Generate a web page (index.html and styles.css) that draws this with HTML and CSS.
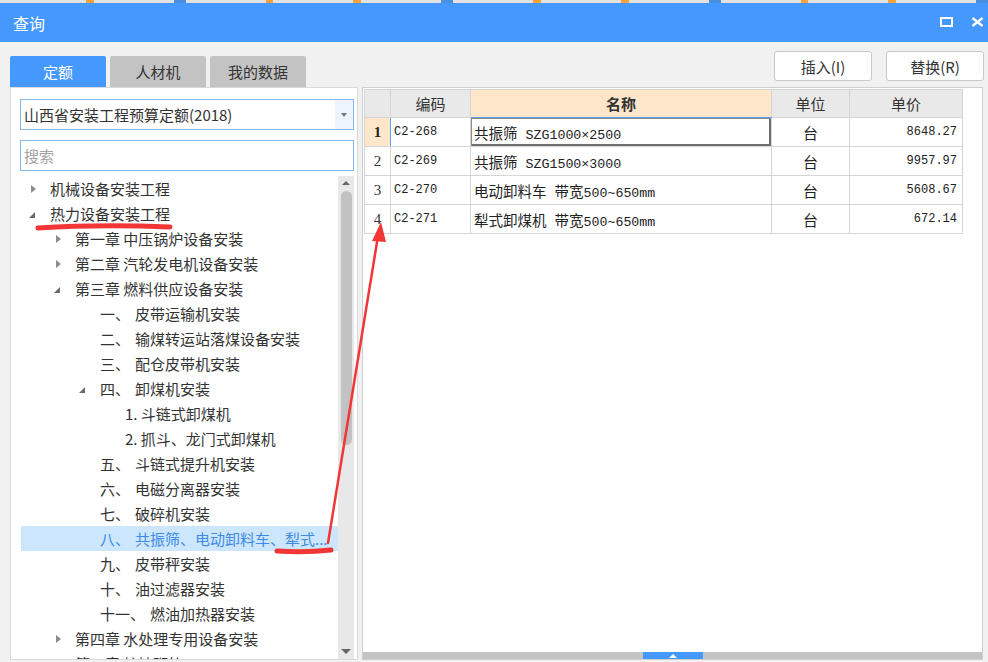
FILE: index.html
```html
<!DOCTYPE html>
<html lang="zh-CN">
<head>
<meta charset="utf-8">
<title>查询</title>
<link rel="stylesheet" href="styles.css">
</head>
<body>
<div class="strip"><i></i><i class="b"></i><i></i><i></i><i class="b"></i><i></i><i></i><i class="b"></i><i></i><i></i><i class="b"></i></div>
<header class="titlebar">
  <span class="title">查询</span>
  <div class="wctl">
    <svg width="13" height="10" viewBox="0 0 13 10"><rect x="1" y="1" width="11" height="8" fill="none" stroke="#fff" stroke-width="2"/></svg>
    <svg width="13" height="10" viewBox="0 0 13 10"><path d="M1.5 1L11.5 9M11.5 1L1.5 9" stroke="#fff" stroke-width="2.3" fill="none"/></svg>
  </div>
</header>
<div class="toolbar">
  <div class="tabs">
    <div class="tab active">定额</div>
    <div class="tab">人材机</div>
    <div class="tab">我的数据</div>
  </div>
  <div class="btns">
    <button class="btn">插入(I)</button>
    <button class="btn">替换(R)</button>
  </div>
</div>
<div class="main">
  <section class="left">
    <div class="combo"><span class="combo-text">山西省安装工程预算定额(2018)</span><span class="combo-arrow"></span></div>
    <div class="search">搜索</div>
    <div class="treewrap">
      <div class="tree">
        <div class="node l0"><i class="tw c"></i><span>机械设备安装工程</span></div>
        <div class="node l0"><i class="tw e"></i><span>热力设备安装工程</span></div>
        <div class="node l1"><i class="tw c"></i><span>第一章 中压锅炉设备安装</span></div>
        <div class="node l1"><i class="tw c"></i><span>第二章 汽轮发电机设备安装</span></div>
        <div class="node l1"><i class="tw e"></i><span>第三章 燃料供应设备安装</span></div>
        <div class="node l2"><i class="tw"></i><span class="num">一、</span><span>皮带运输机安装</span></div>
        <div class="node l2"><i class="tw"></i><span class="num">二、</span><span>输煤转运站落煤设备安装</span></div>
        <div class="node l2"><i class="tw"></i><span class="num">三、</span><span>配仓皮带机安装</span></div>
        <div class="node l2"><i class="tw e"></i><span class="num">四、</span><span>卸煤机安装</span></div>
        <div class="node l3"><i class="tw"></i><span>1. 斗链式卸煤机</span></div>
        <div class="node l3"><i class="tw"></i><span>2. 抓斗、龙门式卸煤机</span></div>
        <div class="node l2"><i class="tw"></i><span class="num">五、</span><span>斗链式提升机安装</span></div>
        <div class="node l2"><i class="tw"></i><span class="num">六、</span><span>电磁分离器安装</span></div>
        <div class="node l2"><i class="tw"></i><span class="num">七、</span><span>破碎机安装</span></div>
        <div class="node l2 sel"><i class="tw"></i><span class="num">八、</span><span>共振筛、电动卸料车、犁式...</span></div>
        <div class="node l2"><i class="tw"></i><span class="num">九、</span><span>皮带秤安装</span></div>
        <div class="node l2"><i class="tw"></i><span class="num">十、</span><span>油过滤器安装</span></div>
        <div class="node l2"><i class="tw"></i><span class="num">十一、</span><span>燃油加热器安装</span></div>
        <div class="node l1"><i class="tw c"></i><span>第四章 水处理专用设备安装</span></div>
        <div class="node l1"><i class="tw c"></i><span>第五章 炉墙砌筑</span></div>
      </div>
      <div class="vscroll"><i class="up"></i><div class="thumb"></div><div class="fill"></div><i class="down"></i></div>
    </div>
  </section>
  <section class="right">
    <div class="gridarea">
      <table class="grid">
        <colgroup><col class="c-rn"><col class="c-code"><col class="c-name"><col class="c-unit"><col class="c-price"></colgroup>
        <thead>
          <tr><th></th><th>编码</th><th class="hname">名称</th><th>单位</th><th>单价</th></tr>
        </thead>
        <tbody>
          <tr><td class="rn cur">1</td><td class="code">C2-268</td><td class="nm focus">共振筛<span class="m"> SZG1000×2500</span></td><td class="unit">台</td><td class="price">8648.27</td></tr>
          <tr><td class="rn">2</td><td class="code">C2-269</td><td class="nm">共振筛<span class="m"> SZG1500×3000</span></td><td class="unit">台</td><td class="price">9957.97</td></tr>
          <tr><td class="rn">3</td><td class="code">C2-270</td><td class="nm">电动卸料车<span class="m"> </span>带宽<span class="m">500~650mm</span></td><td class="unit">台</td><td class="price">5608.67</td></tr>
          <tr><td class="rn">4</td><td class="code">C2-271</td><td class="nm">犁式卸煤机<span class="m"> </span>带宽<span class="m">500~650mm</span></td><td class="unit">台</td><td class="price">672.14</td></tr>
        </tbody>
      </table>
    </div>
    <div class="hsplit"><div class="grip"><i></i></div></div>
  </section>
</div>
<svg class="marks" width="988" height="662" viewBox="0 0 988 662">
  <path d="M38 228 Q100 224 170 227" stroke="#f23636" stroke-width="5" stroke-linecap="round" fill="none"/>
  <path d="M277 551 Q305 553 331 550" stroke="#f23636" stroke-width="5" stroke-linecap="round" fill="none"/>
  <path d="M328 543 L378 236" stroke="#f23636" stroke-width="2.5" stroke-linecap="round" fill="none"/>
  <polygon points="381,222 372,241 386,242" fill="#f23636"/>
</svg>
</body>
</html>
```
FILE: styles.css
```css
* { box-sizing: border-box; margin: 0; padding: 0; }
html, body { width: 988px; height: 662px; overflow: hidden; }
body {
  background: #f1f1f1;
  font-family: "Noto Sans CJK SC", "Noto Sans", sans-serif;
  color: #333;
  font-size: 15px;
  position: relative;
}

.strip { height: 3px; background: #e2e2e2; display: flex; gap: 80px; padding-left: 86px; }
.strip i { width: 9px; background: #f5a23a; }
.strip i.b { background: #4a8fe0; width: 14px; }

.titlebar {
  height: 39px;
  background: #4599fe;
  display: flex;
  align-items: center;
  padding: 0 4px 0 13px;
  color: #fff;
}
.title { flex: 1; font-size: 16px; }
.wctl { display: flex; align-items: center; gap: 18px; padding-bottom: 1px; }
.wctl svg { display: block; }

.toolbar {
  height: 45px;
  display: flex;
  justify-content: space-between;
  padding: 0 4px 0 10px;
}
.tabs { display: flex; gap: 4px; align-self: flex-end; }
.tab {
  width: 96px;
  height: 31px;
  background: #c3c3c3;
  border-radius: 2px 2px 0 0;
  display: flex;
  align-items: center;
  justify-content: center;
  font-size: 15px;
  color: #333;
}
.tab.active { background: #4599fe; color: #fff; }
.btns { display: flex; gap: 14px; padding-top: 9px; align-items: flex-start; }
.btn {
  width: 98px;
  height: 30px;
  background: #fff;
  border: 1px solid #c9c9c9;
  border-radius: 3px;
  font-family: "Noto Sans CJK SC", "Noto Sans", sans-serif;
  font-size: 15px;
  color: #333;
}

.main {
  display: flex;
  gap: 4px;
  padding: 0 5px 0 10px;
  height: 573px;
}

.left {
  width: 348px;
  flex: none;
  background: #fff;
  border: 1px solid #d9d9d9;
  padding: 11px 3px 0 9px;
  display: flex;
  flex-direction: column;
}
.combo {
  height: 31px;
  border: 1px solid #86b6ee;
  display: flex;
  align-items: stretch;
}
.combo-text { flex: 1; padding-left: 3px; display: flex; align-items: center; font-size: 15px; color: #333; }
.combo-arrow {
  width: 18px;
  background: #eef4fd;
  display: flex;
  align-items: center;
  justify-content: center;
}
.combo-arrow::after {
  content: "";
  border-top: 4px solid #777;
  border-left: 3.5px solid transparent;
  border-right: 3.5px solid transparent;
}
.search {
  height: 31px;
  margin-top: 10px;
  border: 1px solid #86b6ee;
  padding-left: 3px;
  display: flex;
  align-items: center;
  color: #a3a3a3;
  font-size: 15px;
}

.treewrap {
  margin-top: 5px;
  flex: 1;
  min-height: 0;
  display: flex;
  padding-left: 1px;
}
.tree { width: 317px; overflow: hidden; }
.node {
  height: 25px;
  display: flex;
  align-items: center;
  white-space: nowrap;
  font-size: 15px;
  color: #333;
}
.node.l0 { padding-left: 10px; }
.node.l1 { padding-left: 35px; }
.node.l2 { padding-left: 60px; }
.node.l3 { padding-left: 85px; }
.node.sel { background: #cce6fd; color: #3d8be3; }
.tw { width: 19px; flex: none; display: flex; align-items: center; height: 10px; }
.tw.c::before {
  content: "";
  border-left: 5px solid #8c8c8c;
  border-top: 4.5px solid transparent;
  border-bottom: 4.5px solid transparent;
}
.tw.e::before {
  content: "";
  margin-left: -2px;
  margin-top: 3px;
  border-bottom: 6px solid #6a6a6a;
  border-left: 6px solid transparent;
}
.num { margin-right: 5px; }

.vscroll {
  width: 16px;
  flex: none;
  background: #e8e8e8;
  display: flex;
  flex-direction: column;
  align-items: center;
  padding: 5px 0 5px;
}
.vscroll .up {
  border-bottom: 4px solid #666;
  border-left: 4.5px solid transparent;
  border-right: 4.5px solid transparent;
}
.vscroll .thumb {
  width: 11px;
  height: 254px;
  margin-top: 6px;
  background: #c2c2c2;
  border-radius: 6px;
}
.vscroll .fill { flex: 1; }
.vscroll .down {
  border-top: 5px solid #666;
  border-left: 5px solid transparent;
  border-right: 5px solid transparent;
}

.right {
  flex: 1;
  background: #fff;
  border: 1px solid #cfcfcf;
  display: flex;
  flex-direction: column;
}
.gridarea { flex: 1; padding: 1px 0 0 1px; }
.grid {
  border-collapse: collapse;
  table-layout: fixed;
  width: 598px;
}
.c-rn { width: 26px; }
.c-code { width: 80px; }
.c-name { width: 301px; }
.c-unit { width: 78px; }
.c-price { width: 113px; }
.grid th, .grid td { border: 1px solid #d5d5d5; padding: 0; white-space: nowrap; overflow: hidden; }
.grid th {
  height: 28px;
  background: #e9e9e9;
  font-weight: normal;
  font-size: 15px;
  color: #333;
  text-align: center;
}
.grid th.hname { background: #fde6c9; font-weight: bold; border-bottom: 1px solid #5aa2f5; }
.grid td { height: 29px; }
.rn { text-align: center; font-family: "Liberation Serif", serif; font-size: 15px; color: #333; }
.rn.cur { background: #fde6c9; font-weight: bold; color: #222; border-right: 1px solid #5aa2f5; }
.code { font-family: "Liberation Mono", monospace; font-size: 12px; padding-left: 3px !important; color: #222; }
.nm { font-size: 14.5px; padding-left: 3px !important; color: #222; }
.nm .m { font-family: "Liberation Mono", monospace; font-size: 13.3px; }
.nm.focus { box-shadow: inset 1px 1px 0 #8a8a8a, inset -2px -2px 0 #6e6e6e; }
.unit { text-align: center; font-size: 15px; color: #222; }
.price { text-align: right; font-family: "Liberation Mono", monospace; font-size: 12px; padding-right: 5px !important; color: #222; }

.hsplit {
  height: 7px;
  background: #c3c3c3;
  display: flex;
  justify-content: center;
}
.grip {
  width: 60px;
  background: #4599fe;
  display: flex;
  align-items: center;
  justify-content: center;
}
.grip i {
  border-bottom: 4px solid #fff;
  border-left: 4px solid transparent;
  border-right: 4px solid transparent;
}

.marks { position: absolute; left: 0; top: 0; pointer-events: none; }
```
